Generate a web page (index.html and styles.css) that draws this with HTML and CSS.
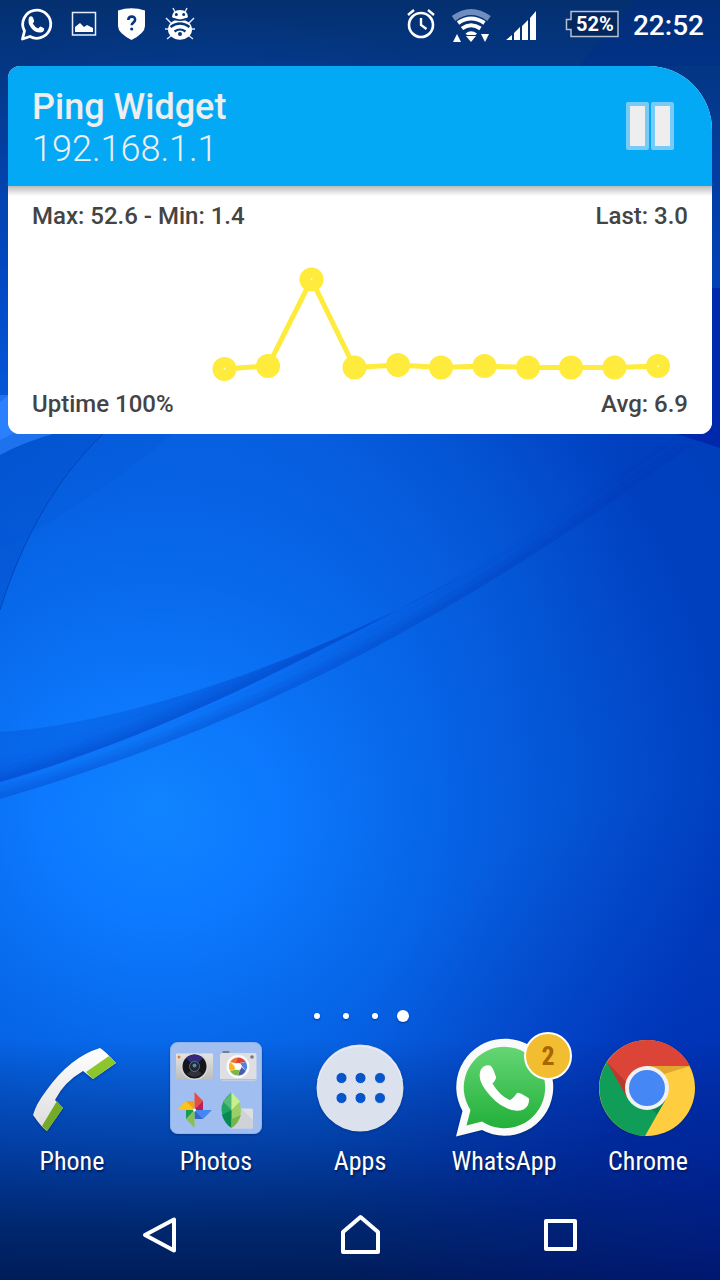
FILE: index.html
```html
<!DOCTYPE html>
<html lang="en">
<head>
<meta charset="utf-8">
<meta name="viewport" content="width=device-width, initial-scale=1">
<title>Home screen</title>
<link rel="stylesheet" href="styles.css">
</head>
<body>
<div class="screen">
  <svg class="wallpaper" viewBox="0 0 720 1280" preserveAspectRatio="none" aria-hidden="true">
    <defs>
      <radialGradient id="glow" gradientUnits="userSpaceOnUse" cx="160" cy="800" r="640">
        <stop offset="0" stop-color="#1085ff"/><stop offset=".18" stop-color="#0d7aff"/><stop offset=".4" stop-color="#0767e9"/><stop offset=".62" stop-color="#0456d6"/><stop offset=".88" stop-color="#0040c0"/><stop offset="1" stop-color="#003fbc"/>
      </radialGradient>
      <linearGradient id="topShade" x2="0" y2="1"><stop offset="0" stop-color="#04306f"/><stop offset=".3" stop-color="#04398a" stop-opacity=".85"/><stop offset="1" stop-color="#0448c0" stop-opacity="0"/></linearGradient>
      <linearGradient id="bottomShade" x2="0" y2="1"><stop offset="0" stop-color="#00215f" stop-opacity="0"/><stop offset=".45" stop-color="#00246e" stop-opacity=".5"/><stop offset=".78" stop-color="#002466" stop-opacity=".92"/><stop offset="1" stop-color="#001c58"/></linearGradient>
      <radialGradient id="cornerShade" gradientUnits="userSpaceOnUse" cx="740" cy="1200" r="420"><stop offset="0" stop-color="#0010a0" stop-opacity=".4"/><stop offset="1" stop-color="#0010a0" stop-opacity="0"/></radialGradient>
      <radialGradient id="upperLight" gradientUnits="userSpaceOnUse" cx="220" cy="430" r="420"><stop offset="0" stop-color="#0966e6" stop-opacity=".55"/><stop offset="1" stop-color="#0966e6" stop-opacity="0"/></radialGradient>
      <filter id="soft" filterUnits="userSpaceOnUse" x="-40" y="380" width="800" height="460"><feGaussianBlur stdDeviation="9"/></filter>
      <clipPath id="aboveMain"><path d="M0 799C240 728 440 630 698 441L720 420V0H0Z"/></clipPath>
      <clipPath id="aboveSecond"><path d="M0 782C180 730 330 645 468 573C350 640 150 722 0 732Z"/></clipPath>
    </defs>
    <rect width="720" height="1280" fill="url(#glow)"/>
    <rect width="720" height="390" fill="url(#topShade)"/>
    <rect width="720" height="860" fill="url(#upperLight)"/>
    <g clip-path="url(#aboveMain)"><path d="M-40 813L0 802C240 731 440 633 701 444" fill="none" stroke="#0034b4" stroke-opacity=".7" stroke-width="12" filter="url(#soft)"/></g>
    <path d="M0 782C180 730 330 645 468 573C350 640 150 722 0 732Z" fill="#0048c8" fill-opacity=".3"/>
    <g clip-path="url(#aboveSecond)"><path d="M-40 796L0 785C180 733 330 648 468 573" fill="none" stroke="#0038bb" stroke-opacity=".7" stroke-width="14" filter="url(#soft)"/></g>
    <path d="M0 610C22 540 55 480 103 434V400H0Z" fill="#0042b8" fill-opacity=".28"/>
    <path d="M0 610C22 540 55 480 103 434" fill="none" stroke="#003aab" stroke-opacity=".7"/>
    <path d="M0 548Q90 505 172 434H103C70 470 50 500 30 532Z" fill="#0042b8" fill-opacity=".1"/>
    <path d="M0 455Q24 442 53 434V395H0Z" fill="#1f72ee"/>
    <path d="M0 402L20 386V430L0 440Z" fill="#2b80ff"/>
    <path d="M677 434L720 448V288H708Z" fill="#0028ac"/>
    <path d="M634 0L579 66H720V0Z" fill="#002a8c" fill-opacity=".35"/>
    <rect y="1040" width="720" height="240" fill="url(#bottomShade)"/>
    <rect y="780" width="720" height="500" fill="url(#cornerShade)"/>
  </svg>

  <header class="status">
    <div class="status-group">
      <svg class="status-icon" viewBox="0 0 32 32" role="img" aria-label="WhatsApp message"><path d="M2.500 31L4.500 23A14 14 0 1 1 10 28.500Z" fill="none" stroke="#fff" stroke-width="2.800" stroke-linejoin="round"/><path d="M9 9.500q2-2.500 4 0l1.200 3.500q0 1-1.500 2.500q2 3.500 5.500 5l2-2q1 0 4 2q0 4-4 4q-5.500 0-9-4.500q-4-5-2.200-10.500z" fill="#fff"/></svg>
      <svg class="status-icon" viewBox="0 0 32 32" role="img" aria-label="Picture saved"><path d="M4.500 4.500h23v22.500h-23z" fill="none" stroke="#e9effa" stroke-width="1.500"/><path d="M7 24v-5l5-4l4 4l3-2l6 3v4z" fill="#fff"/></svg>
      <svg class="status-icon" viewBox="0 0 32 32" role="img" aria-label="Security notice"><path d="M2 2.500Q15.500-2 29 2.500V18Q29 25 15.500 32Q2 25 2 18Z" fill="#fff"/><path d="M12.300 12q0-3.400 3.400-3.400t3.400 3.200c0 2.600-3.400 2.800-3.400 5.400" fill="none" stroke="#04367f" stroke-width="2.600"/><circle cx="15.700" cy="21" r="1.600" fill="#04367f"/></svg>
      <svg class="status-icon" viewBox="0 0 32 32" role="img" aria-label="Wireless debugging"><path d="M11 4L9 0M21 4l2-4M7 15l-5-5M25 15l5-5M6 21H1M26 21h5M8 27l-5 4M24 27l5 4" stroke="#d9e4f6" stroke-width="1.500"/><path d="M8 9.500Q8 2 16 2T24 9.500Q16 13 8 9.500Z" fill="#fff"/><ellipse cx="16" cy="21.500" rx="12" ry="10.300" fill="#fff"/><path d="M7 10q9 4.500 18 0" fill="none" stroke="#04367f" stroke-width="1.500"/><circle cx="12.300" cy="6.500" r="1.500" fill="#04367f"/><circle cx="19.700" cy="6.500" r="1.500" fill="#04367f"/><path d="M6.500 19q9.500-7 19 0M10.500 23.500q5.500-4 11 0" fill="none" stroke="#04367f" stroke-width="2.200"/><circle cx="16" cy="26" r="2" fill="#04367f"/></svg>
    </div>
    <div class="status-group status-right">
      <svg class="status-icon" viewBox="0 0 32 32" role="img" aria-label="Alarm set"><circle cx="16" cy="17" r="12" fill="none" stroke="#fff" stroke-width="2.600"/><path d="M16 10V17l5.500 4M3 7l6-5M29 7l-6-5" fill="none" stroke="#fff" stroke-width="2.400"/></svg>
      <svg class="status-icon status-wide" viewBox="0 0 40 32" role="img" aria-label="Wi-Fi"><path d="M2.500 10.500Q20-2.500 38 10.500" fill="none" stroke="#6f8dbf" stroke-width="6"/><path d="M7 15Q20 6 33.500 15" fill="none" stroke="#fff" stroke-width="4"/><path d="M11 20.500Q20 14 29.500 20.500" fill="none" stroke="#fff" stroke-width="4"/><path d="M14.500 25.500Q20 21 26 25.500L24.500 27H16Z" fill="#fff"/><path d="M15 28h10l-5 6z M2 34l4-8l4 8z M30 26h8l-4 8z" fill="#fff"/></svg>
      <svg class="status-icon" viewBox="0 0 32 32" role="img" aria-label="Signal strength"><path d="M1 32l6-5v5zM9 25l6-6v13H9zM17 18l6-6v20h-6zM25 10l6-7v29h-6z" fill="#fff"/></svg>
      <div class="battery">
        <svg class="battery-shape" viewBox="0 0 54 28" aria-hidden="true"><path d="M6 1.500H53V26.500H6V19.500H1.500V9.500H6Z" fill="#03265c" stroke="#b3bfd2" stroke-width="1.500"/></svg>
        <span class="battery-text">52%</span>
      </div>
      <time class="clock">22:52</time>
    </div>
  </header>

  <main class="home">
    <section class="widget">
      <div class="widget-head">
        <div class="widget-names">
          <h1 class="widget-title">Ping Widget</h1>
          <p class="widget-host">192.168.1.1</p>
        </div>
        <button class="pause" type="button" aria-label="Pause"><svg class="pause-icon" viewBox="0 0 52 52"><path d="M4 4h19v44H4zM29 4h19v44H29z" fill="#eee" stroke="#78cbf7" stroke-width="4" stroke-linejoin="round"/></svg></button>
      </div>
      <div class="widget-body">
        <div class="stat-row"><span>Max: 52.6 - Min: 1.4</span><span>Last: 3.0</span></div>
        <svg class="chart" viewBox="0 0 656 160" role="img" aria-label="Recent ping times">
          <path d="M192.500 139L236 136L279.500 49.500L322.500 137.500L366 135L409 137.500L452.500 136L496 137.500H582.500L626 136" fill="none" stroke="#ffeb3b" stroke-width="5"/>
          <g fill="#ffeb3b"><circle cx="192.500" cy="139" r="12"/><circle cx="236" cy="136" r="12"/><circle cx="279.500" cy="49.500" r="12"/><circle cx="322.500" cy="137.500" r="12"/><circle cx="366" cy="135" r="12"/><circle cx="409" cy="137.500" r="12"/><circle cx="452.500" cy="136" r="12"/><circle cx="496" cy="137.500" r="12"/><circle cx="539" cy="137.500" r="12"/><circle cx="582.500" cy="137.500" r="12"/><circle cx="626" cy="136" r="12"/></g>
          <g fill="#fffbd5"><circle cx="192.500" cy="138.500" r="1"/><circle cx="279.500" cy="49" r="1"/><circle cx="626" cy="136" r="1"/></g>
        </svg>
        <div class="stat-row"><span>Uptime 100%</span><span>Avg: 6.9</span></div>
      </div>
    </section>

    <div class="pages"><i class="dot"></i><i class="dot"></i><i class="dot"></i><i class="dot dot-active"></i></div>
  </main>

  <nav class="dock">
    <a class="app" href="#phone">
      <svg class="app-icon" viewBox="0 0 96 96" aria-hidden="true">
        <defs><linearGradient id="ph" x2="0" y2="1"><stop offset="0" stop-color="#fff"/><stop offset="1" stop-color="#dcdcdc"/></linearGradient></defs>
        <path d="M76 8Q80 10 92 23L69 39L59 31Q40 42 31 60L39 68L23 91Q18 88 9 75Q12 64 22 51Q46 17 76 8Z" fill="url(#ph)"/>
        <path d="M62 32L85 16L92 23L69 39Z" fill="#8cc62c"/><path d="M18 86L33 61L39 68L23 91Z" fill="#73ab28"/>
      </svg>
      <span class="app-name">Phone</span>
    </a>
    <a class="app" href="#photos">
      <svg class="app-icon" viewBox="0 0 96 96" aria-hidden="true">
        <defs>
          <linearGradient id="cam" x2="0" y2="1"><stop offset="0" stop-color="#e4e4e4"/><stop offset="1" stop-color="#bdbdbd"/></linearGradient>
          <linearGradient id="lens" x2="0" y2="1"><stop offset="0" stop-color="#3c1f86"/><stop offset=".8" stop-color="#273a78"/><stop offset="1" stop-color="#15161b"/></linearGradient>
        </defs>
        <rect x="2.500" y="2.500" width="91" height="91" rx="7" fill="#a0bff0" stroke="#8db2ee"/>
        <rect x="8" y="13.500" width="37" height="26" rx="1" fill="url(#cam)"/><circle cx="11" cy="17" r="1.500" fill="#f07a28"/>
        <circle cx="26.500" cy="26.500" r="13.500" fill="#d9d9d9"/><circle cx="26.500" cy="26.500" r="12" fill="#15161b"/><path d="M26.500 26.500L18 18Q26.500 11 35 18Z" fill="url(#lens)"/><path d="M26.500 27L19 34Q26.500 40 34 34Z" fill="#30323a"/><circle cx="26.500" cy="26.500" r="5" fill="#20252e" stroke="#53708c" stroke-width="1"/><circle cx="26.500" cy="25.500" r="2" fill="#4193b5"/>
        <rect x="54.500" y="11" width="7" height="4" rx="1" fill="#777d87"/><rect x="52" y="13" width="36.500" height="27.500" rx="2" fill="#dedfe2"/><path d="M52 39.500h36" stroke="#b9bfca"/><circle cx="84" cy="17" r="1.800" fill="#777"/>
        <circle cx="70" cy="26.500" r="11.500" fill="#fafafa"/>
        <g transform="translate(70 26.500)"><path d="M-7.800-4.500A9 9 0 0 1 0-9L3-2Z" fill="#ef7138"/><path d="M0-9A9 9 0 0 1 7.800-4.500L-2-3Z" fill="#dd4438"/><path d="M7.800-4.500A9 9 0 0 1 7.800 4.500L2-3Z" fill="#4f83dc"/><path d="M7.800 4.500A9 9 0 0 1 0 9L3 0Z" fill="#4a5da6"/><path d="M0 9A9 9 0 0 1-7.800 4.500L2 2Z" fill="#7bb848"/><path d="M-7.800 4.500A9 9 0 0 1-7.800-4.500L-1 2Z" fill="#f8b51c"/><circle r="3.500" fill="#fff"/></g>
        <path d="M26.500 52L35 61V70H26.500Z" fill="#e05045"/><path d="M26.500 70L35 61V70Z" fill="#b91d5c"/><path d="M9 70L18 61L26.500 70Z" fill="#ffc516"/><path d="M18 61H26.500V70Z" fill="#f89c22"/><path d="M44 70L35 79L26.500 70Z" fill="#4386f4"/><path d="M26.500 70L35 79H26.500Z" fill="#3367c9"/><path d="M26.500 88L18 79L26.500 70Z" fill="#87c151"/><path d="M18 70H26.500L18 79Z" fill="#189b55"/><circle cx="26.500" cy="70" r="1.500" fill="#fff"/>
        <rect x="62" y="68.500" width="23" height="20" rx="1.500" fill="#dddfe2"/><path d="M73 68.500L85 80V88H64Z" fill="#cfd2d6"/>
        <path d="M63.500 52Q53 61 53.500 70Q54 81 63.500 88Z" fill="#1fa463"/><path d="M63.500 52Q73 61 73 70Q73 81 63.500 88Z" fill="#9acf67"/><path d="M63.500 52L55 61.500L63.500 70Z" fill="#58b978"/><path d="M63.500 52L72 61.500L63.500 70Z" fill="#c6f28d"/><path d="M54 75L63.500 70V88Q57 84 54 75Z" fill="#078a51"/><path d="M73 75L63.500 79V88Q70 84 73 75Z" fill="#78b54a"/>
      </svg>
      <span class="app-name">Photos</span>
    </a>
    <a class="app" href="#apps">
      <svg class="app-icon" viewBox="0 0 96 96" aria-hidden="true">
        <circle cx="48" cy="48" r="43.500" fill="#dbe2ed"/><path d="M6 40A43 43 0 0 1 90 40" fill="none" stroke="#edf1f7"/>
        <g fill="#0755ca" stroke="#e9eef6" stroke-width=".8"><circle cx="29.500" cy="38" r="5.500"/><circle cx="48.500" cy="38" r="5.500"/><circle cx="68" cy="38" r="5.500"/><circle cx="29.500" cy="58" r="5.500"/><circle cx="48.500" cy="58" r="5.500"/><circle cx="68" cy="58" r="5.500"/></g>
      </svg>
      <span class="app-name">Apps</span>
    </a>
    <a class="app" href="#whatsapp">
      <span class="app-badged">
      <svg class="app-icon" viewBox="0 0 96 96" aria-hidden="true">
        <defs><linearGradient id="wa" x2="0" y2="1"><stop offset="0" stop-color="#65d674"/><stop offset="1" stop-color="#22b03a"/></linearGradient></defs>
        <path d="M0 96.500L6.500 71A48.500 48.500 0 1 1 26 90Z" fill="#fafafa"/>
        <path d="M10.500 85.500L14.500 70A40.700 40.700 0 1 1 26 81.500Z" fill="url(#wa)"/>
        <path d="M25.700 28.500Q29 24.500 34 25.500Q36.500 26 40 37Q40.500 39 36.500 43.500Q43.500 55.500 53.500 60Q56 60 61 53Q63 52 72.500 58Q74 59 72 65Q69 71 61 70.700Q46 69.500 34 55.500Q23 43 23.700 35Q24 30 25.700 28.500Z" fill="#fff"/>
      </svg>
      <b class="badge">2</b>
      </span>
      <span class="app-name">WhatsApp</span>
    </a>
    <a class="app" href="#chrome">
      <svg class="app-icon" viewBox="0 0 96 96" aria-hidden="true">
        <circle cx="47" cy="48" r="48" fill="#ffcd40"/>
        <path d="M7 22A48 48 0 0 0 45 96L66 59L47 48Z" fill="#0f9d58"/>
        <path d="M7 22A48 48 0 0 1 90 26H47L28 59Z" fill="#db4437"/>
        <path d="M47 26H90L64 34Z" fill="#e2a52e"/><path d="M7 22L28 59L27 43Z" fill="#b93a2d"/><path d="M66 59L57 74L50 68Z" fill="#0b864a"/>
        <circle cx="47" cy="48" r="22" fill="#f1f1f1"/><circle cx="47" cy="48" r="18" fill="#4587f4"/>
      </svg>
      <span class="app-name">Chrome</span>
    </a>
  </nav>

  <footer class="navbar">
    <button class="nav-btn" type="button" aria-label="Back"><svg class="nav-icon" viewBox="0 0 44 44"><path d="M36 5.500V36.500L7 21Z" fill="none" stroke="#fff" stroke-width="4" stroke-linejoin="round"/></svg></button>
    <button class="nav-btn" type="button" aria-label="Home"><svg class="nav-icon" viewBox="0 0 44 44"><path d="M5 38V18L22.500 3L40 18V38Z" fill="none" stroke="#fff" stroke-width="4" stroke-linejoin="round"/></svg></button>
    <button class="nav-btn" type="button" aria-label="Recent apps"><svg class="nav-icon" viewBox="0 0 44 44"><path d="M8 7H37V35H8Z" fill="none" stroke="#fff" stroke-width="4" stroke-linejoin="round"/></svg></button>
  </footer>
</div>
</body>
</html>
```
FILE: styles.css
```css
* { box-sizing: border-box; }
body { margin: 0; font-family: Roboto, "Noto Sans", sans-serif; color: #fff; background: #0453d2; }
svg { display: block; overflow: visible; }
button { border: 0; padding: 0; background: none; color: inherit; font: inherit; }

.screen { position: relative; isolation: isolate; min-height: 100vh; display: flex; flex-direction: column; overflow: hidden; }
.wallpaper { position: absolute; inset: 0; width: 100%; height: 100%; z-index: -1; overflow: hidden; }

.status { display: flex; justify-content: space-between; align-items: center; height: 48px; padding: 0 16px 0 20px; }
.status-group { display: flex; align-items: center; gap: 16px; }
.status-right { gap: 14px; }
.status-icon { width: 32px; height: 32px; }
.status-wide { width: 40px; }
.battery { position: relative; width: 54px; height: 28px; margin-left: 14px; }
.battery-shape { position: absolute; inset: 0; }
.battery-text { position: relative; display: block; padding-left: 6px; text-align: center; font-size: 20px; line-height: 28px; font-weight: 700; }
.clock { padding-top: 4px; font-size: 28px; line-height: 44px; font-weight: 500; }

.home { flex: 1; display: flex; flex-direction: column; justify-content: space-between; padding: 18px 8px; }
.widget { border-radius: 12px 64px 12px 12px; background: #fff; color: #444; overflow: hidden; }
.widget-head { display: flex; justify-content: space-between; align-items: center; height: 120px; padding: 0 36px 0 24px; background: #04a9f6; color: #eee; }
.widget-names { padding-top: 4px; }
.widget-title { margin: 0; font-size: 36px; line-height: 42px; font-weight: 500; }
.widget-host { margin: 0; font-size: 36px; line-height: 42px; font-weight: 300; }
.pause-icon { width: 52px; height: 52px; }
.widget-body { padding: 16px 24px; background: linear-gradient(#bbb, #fff 10px); }
.stat-row { display: flex; justify-content: space-between; font-size: 24px; line-height: 28px; font-weight: 500; }
.chart { width: 100%; height: auto; }

.pages { display: flex; justify-content: center; align-items: center; gap: 23px; padding-left: 2px; }
.dot { width: 6px; height: 6px; border-radius: 50%; background: #fff; box-shadow: 0 1px 2px #0038a0; }
.dot-active { width: 12px; height: 12px; margin-left: -4px; }

.dock { display: grid; grid-template-columns: repeat(5, 1fr); }
.app { display: flex; flex-direction: column; align-items: center; gap: 10px; color: #fff; text-decoration: none; }
.app-icon { width: 96px; height: 96px; filter: drop-shadow(0 1px 1px #00226688); }
.app-badged { position: relative; }
.badge { position: absolute; top: -8px; right: -20px; width: 48px; height: 48px; border: 2px solid #fff; border-radius: 50%; background: #f2bd30; color: #a96500; font-family: "Roboto Condensed", Roboto, sans-serif; font-size: 26px; line-height: 44px; font-weight: 700; text-align: center; }
.app-name { font-family: "Roboto Condensed", Roboto, sans-serif; font-size: 26px; line-height: 30px; text-shadow: 1px 2px 2px #001c5a; }

.navbar { display: grid; grid-template-columns: repeat(3, 1fr); height: 104px; padding: 16px 60px 0; }
.nav-btn { display: grid; place-items: center; }
.nav-icon { width: 44px; height: 44px; }
```
